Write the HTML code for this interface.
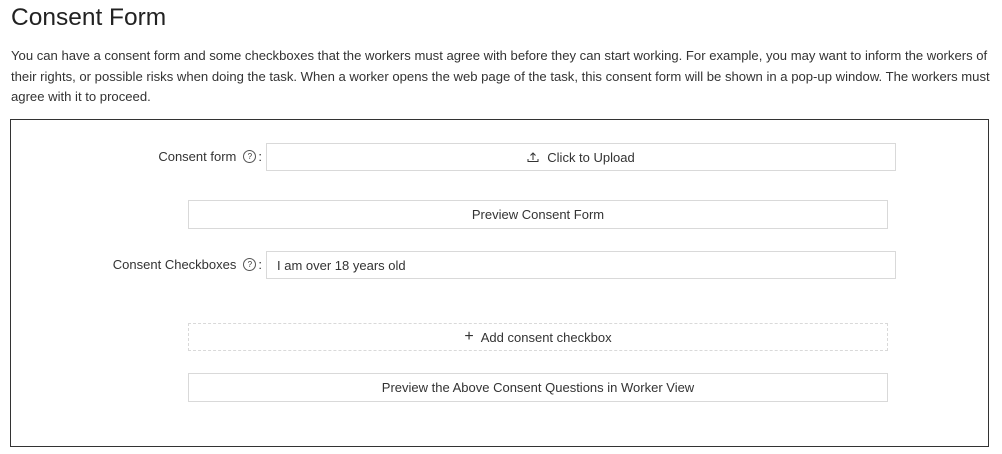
<!DOCTYPE html>
<html><head><style>
body{margin:0;background:#fff;font-family:"Liberation Sans",sans-serif;color:#262626;width:1002px;height:454px;overflow:hidden;position:relative}
h1{position:absolute;left:11px;top:4px;margin:0;font-size:24.5px;font-weight:normal;color:#222}
p{position:absolute;left:11px;top:46px;width:985px;margin:0;font-size:13.1px;line-height:20.5px;color:#333}
.box{position:absolute;left:10px;top:119px;width:977px;height:326px;border:1px solid #333}
.el{position:absolute;box-sizing:border-box;border:1px solid #d9d9d9;font-size:13px;color:#333;display:flex;align-items:center;justify-content:center;background:#fff}
.lbl{position:absolute;font-size:13px;color:#333;text-align:right;display:flex;align-items:center;justify-content:flex-end}
.q{display:inline-block;width:11px;height:11px;border:1px solid #555;border-radius:50%;font-size:8px;line-height:11px;text-align:center;margin:0 2px 0 7px}
</style></head><body>
<h1>Consent Form</h1>
<p>You can have a consent form and some checkboxes that the workers must agree with before they can start working. For example, you may want to inform the workers of their rights, or possible risks when doing the task. When a worker opens the web page of the task, this consent form will be shown in a pop-up window. The workers must agree with it to proceed.</p>
<div class="box"></div>
<div class="lbl" style="left:40px;width:222px;top:143px;height:27px">Consent form <span class="q">?</span>:</div>
<div class="el" style="left:266px;top:143px;width:630px;height:28px"><svg width="12" height="12" viewBox="0 0 12 12" style="margin-right:8px"><path d="M6 9V2M3.5 4.5L6 2l2.5 2.5M1 8v2.5h10V8" fill="none" stroke="#333" stroke-width="1"/></svg>Click to Upload</div>
<div class="el" style="left:188px;top:200px;width:700px;height:29px">Preview Consent Form</div>
<div class="lbl" style="left:40px;width:222px;top:251px;height:27px">Consent Checkboxes <span class="q">?</span>:</div>
<div class="el" style="left:266px;top:251px;width:630px;height:28px;justify-content:flex-start;padding-left:10px">I am over 18 years old</div>
<div class="el" style="left:188px;top:323px;width:700px;height:28px;border-style:dashed"><span style="font-size:16px;margin-right:7px">+</span>Add consent checkbox</div>
<div class="el" style="left:188px;top:373px;width:700px;height:29px">Preview the Above Consent Questions in Worker View</div>
</body></html>
